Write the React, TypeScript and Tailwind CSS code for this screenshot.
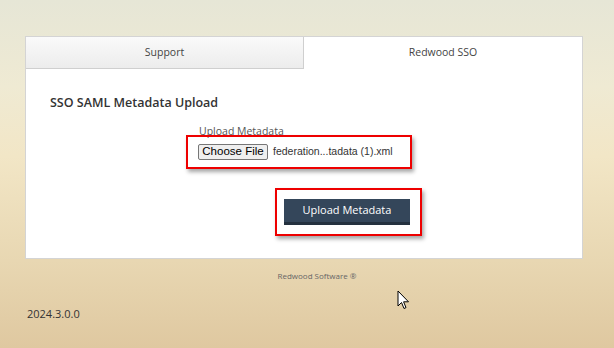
export default function App() {
  return (
    <div
      className="relative w-[614px] h-[348px] overflow-hidden bg-[linear-gradient(180deg,#e6e6d6_0%,#efead3_25%,#f2e6c6_45%,#e8d7b2_75%,#dfc8a0_100%)]"
      style={{ fontFamily: '"Open Sans", "Segoe UI", sans-serif' }}
    >
      <div className="pt-[36px] px-[25px]">
        {/* card */}
        <div className="w-[558px] h-[223px] bg-white border border-[#d4d4d4]">
          <div className="flex h-[32px]">
            <div className="w-[278px] h-full flex items-center justify-center text-[10.5px] text-[#444] bg-[linear-gradient(180deg,#fafafa,#ececec)] border-r border-b border-[#cfcfcf]">
              Support
            </div>
            <div className="flex-1 h-full flex items-center justify-center text-[10.5px] text-[#444]">
              Redwood SSO
            </div>
          </div>

          <div className="pl-[24px] pt-[25px] text-[12.5px] font-semibold text-[#333]">
            SSO SAML Metadata Upload
          </div>

          <div className="flex flex-col items-start pl-[160px] mt-[11px]">
            <div className="ml-[13px] text-[10.5px] text-[#555] leading-[14px] whitespace-nowrap">Upload Metadata</div>
            <div className="w-[226px] h-[34px] border-2 border-[#e00] shadow-[2px_3px_4px_rgba(0,0,0,0.35)] flex items-center pl-[10px] gap-[5px] -mt-[3px] whitespace-nowrap">
              <div
                className="h-[16px] w-[70px] flex items-center justify-center text-[11.5px] text-black bg-[#efefef] border border-[#767676] rounded-[2px] whitespace-nowrap"
                style={{ fontFamily: '"Liberation Sans", Arial, sans-serif' }}
              >
                Choose File
              </div>
              <span
                className="text-[10.5px] text-[#333] whitespace-nowrap"
                style={{ fontFamily: '"Liberation Sans", Arial, sans-serif' }}
              >
                federation...tadata (1).xml
              </span>
            </div>

            <div className="ml-[89px] mt-[19px] w-[147px] h-[48px] border-2 border-[#e00] shadow-[2px_3px_4px_rgba(0,0,0,0.35)] flex items-center justify-center">
              <div className="-ml-[3px] w-[126px] h-[26px] bg-[#34465a] border-b-[3px] border-[#24313f] flex items-center justify-center text-[11px] text-white whitespace-nowrap">
                Upload Metadata
              </div>
            </div>
          </div>
        </div>

        <div className="mt-[11px] text-center pl-[20px] text-[8px] text-[#666]">Redwood Software ®</div>
        <div className="mt-[24px] ml-[2px] text-[11px] text-[#333]">2024.3.0.0</div>
      </div>

      {/* mouse pointer */}
      <svg className="absolute left-[397px] top-[290px]" width="13" height="21" viewBox="0 0 13 21">
        <path
          d="M1 1 L1 16 L4.5 12.5 L7 18.5 L9 17.6 L6.6 11.8 L11.5 11.8 Z"
          fill="#fff"
          stroke="#000"
          strokeWidth="1"
          strokeLinejoin="miter"
        />
      </svg>
    </div>
  );
}
